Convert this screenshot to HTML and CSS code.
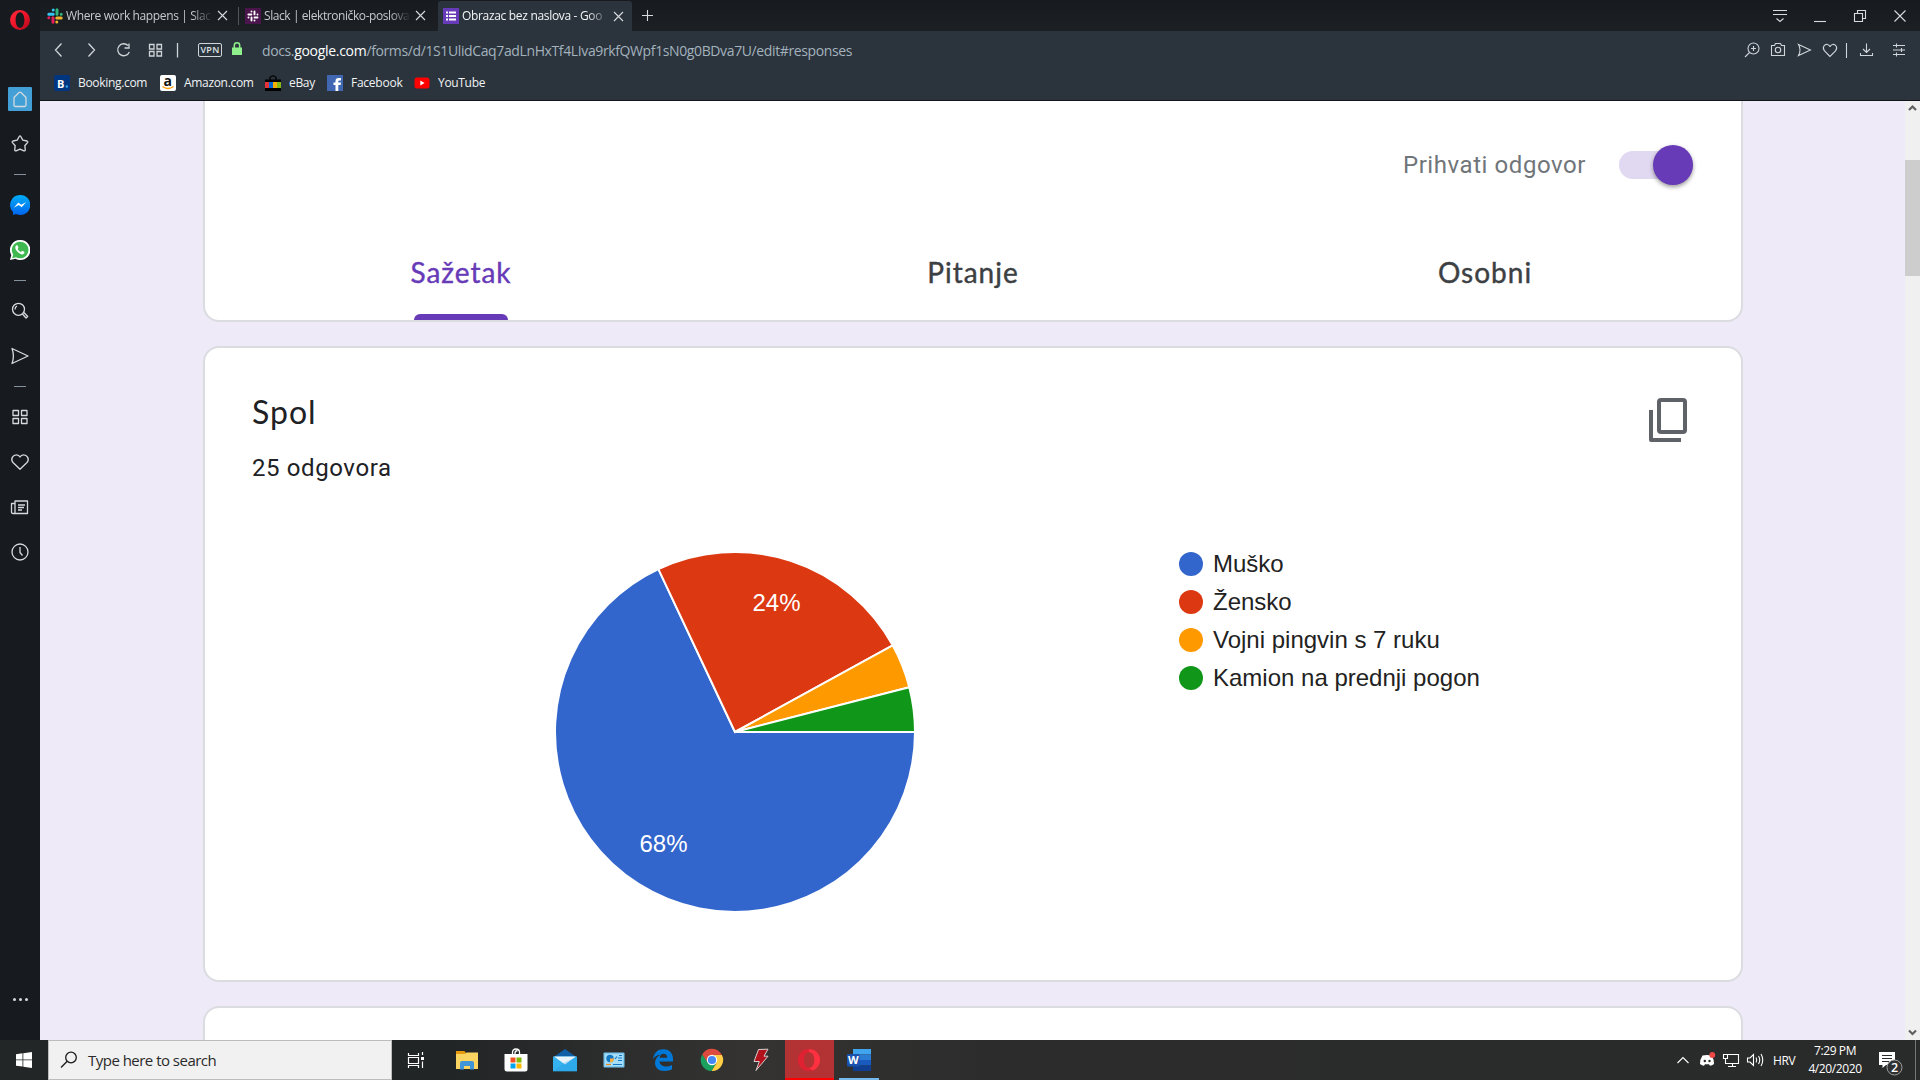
FILE: index.html
```html
<!DOCTYPE html>
<html lang="hr">
<head>
<meta charset="utf-8">
<title>Obrazac bez naslova - Google obrasci</title>
<link rel="stylesheet" href="styles.css">
</head>
<body>
<div class="screen">
  <div class="browser">
    <nav class="sidebar">
      <div class="opera-menu"><svg width="20" height="20" viewBox="0 0 20 20"><defs><linearGradient id="og" x1="0" y1="0" x2="1" y2="1"><stop offset="0" stop-color="#ff2b3c"/><stop offset=".5" stop-color="#f0142a"/><stop offset="1" stop-color="#a80a18"/></linearGradient></defs><path fill="url(#og)" fill-rule="evenodd" d="M10 0a10 10 0 1 0 0 20 10 10 0 0 0 0-20zm0 2.200c2.900 0 4.400 3.800 4.400 7.800s-1.500 7.800-4.400 7.800S5.600 14 5.600 10 7.100 2.200 10 2.200z"/></svg></div>
      <div class="slot"><span class="home"><svg class="line" width="24" height="24" viewBox="0 0 24 24"><path d="M6 18V10.500L11 5.500q1-.8 2 0L18 10.500V18q0 1.500-1.500 1.500h-9Q6 19.500 6 18z"/></svg></span></div>
      <div class="slot"><svg class="line" width="20" height="20" viewBox="0 0 20 20"><path d="M9.200 2.500q.8-1.200 1.600 0l2 3.600 4.200.9q1.300.5.500 1.600l-2.700 3.100.5 4.200q-.1 1.400-1.400.9L10 15.200l-3.900 1.600q-1.300.5-1.400-.9l.5-4.200-2.700-3.100q-.8-1.100.5-1.600l4.200-.9z"/></svg></div>
      <div class="dash"></div>
      <div class="slot"><svg width="20" height="20" viewBox="0 0 20 20"><defs><linearGradient id="mg" x2="0" y2="1"><stop stop-color="#00aef8"/><stop offset="1" stop-color="#0064ef"/></linearGradient></defs><path fill="url(#mg)" d="M10 0a10 10 0 1 1-4 19l-3 1v-3A10 10 0 0 1 10 0z"/><path fill="#fff" d="M3.800 12.800 8.300 7.500l3 2.200 4.900-2.700-4.500 5.300-3-2.200z"/></svg></div>
      <div class="slot"><svg width="20" height="20" viewBox="0 0 20 20"><path fill="#fff" d="M10 0a10 10 0 1 1-4.500 18.700L0 20l1.300-5A10 10 0 0 1 10 0z"/><path fill="#3fb94f" d="M10 1.700a8.300 8.300 0 1 1-4 15.500l-3.800 1 1-3.700A8.300 8.300 0 0 1 10 1.700z"/><path fill="#fff" d="m7 5.200-.9.400c-2 2.200.1 5.200 2.200 7 2.300 1.900 4.800 2.500 5.900.7l.3-1.300-2.300-1.300-1.300 1.300c-1.500-.5-2.600-1.600-3.200-3L8.500 7.800l-.8-2.300z"/></svg></div>
      <div class="dash"></div>
      <div class="slot"><svg class="line" width="20" height="20" viewBox="0 0 20 20"><circle cx="8.500" cy="8.300" r="6"/><path d="M5 8.500Q5 6 7 5M12.500 13l3.500 4 1.700-1.500-3.800-4"/></svg></div>
      <div class="slot"><svg class="line" width="20" height="20" viewBox="0 0 20 20"><path d="m2 2.500 16 7.500-16 7.500Q4.800 10 2 2.500z"/></svg></div>
      <div class="dash"></div>
      <div class="slot"><svg class="line" width="20" height="20" viewBox="0 0 20 20"><rect x="3" y="3.500" width="5.500" height="5"/><rect x="11.500" y="3.500" width="5.500" height="5"/><rect x="3" y="11.500" width="5.500" height="5"/><rect x="11.500" y="11.500" width="5.500" height="5"/></svg></div>
      <div class="slot"><svg class="line" width="20" height="20" viewBox="0 0 20 20"><path d="M10 17.300 3 10.500C0 7 3 2.800 6.500 2.800Q9 2.800 10 5q1-2.200 3.500-2.200C17 2.800 20 7 17 10.500z"/></svg></div>
      <div class="slot"><svg class="line" width="20" height="20" viewBox="0 0 20 20"><path d="M5 16.500V4h12.500v12.500H3q-1.500 0-1.500-1.500V6.500H5M8 8h7M8 10.500h6M8 13h4"/></svg></div>
      <div class="slot"><svg class="line" width="20" height="20" viewBox="0 0 20 20"><circle cx="10" cy="10" r="8"/><path d="M10 5v5.500l2.500 3"/></svg></div>
      <div class="more"><i></i><i></i><i></i></div>
    </nav>

    <div class="window">
      <header class="tabstrip">
        <div class="tab first">
          <svg width="16" height="16" viewBox="0 0 16 16"><g stroke-width="3" stroke-linecap="round"><path stroke="#36c5f0" d="M6.200 2v0M1.800 6.200h4.400"/><path stroke="#2eb67d" d="M10 1.800v4.400M14.200 6.200v0"/><path stroke="#ecb22e" d="M9.800 14v0M9.800 10h4.400"/><path stroke="#e01e5a" d="M6 9.800v4.400M1.800 9.800v0"/></g></svg>
          <span class="title t1">Where work happens | Slac</span>
          <svg class="x" width="11" height="11" viewBox="0 0 11 11"><path d="m1 1 9 9M10 1l-9 9"/></svg>
        </div>
        <div class="tab second">
          <svg width="16" height="16" viewBox="0 0 16 16"><path fill="#4a154b" d="M0 0h16v16H0z"/><g stroke="#fff" stroke-width="1.900" stroke-linecap="round"><path d="M6.500 3.500v0M3.400 6.500h3M9.500 3.400v3M12.500 6.500v0M9.500 12.500v0M9.500 9.500h3M6.500 9.500v3M3.500 9.500v0"/></g></svg>
          <span class="title t2">Slack | elektroničko-poslova</span>
          <svg class="x" width="11" height="11" viewBox="0 0 11 11"><path d="m1 1 9 9M10 1l-9 9"/></svg>
        </div>
        <div class="tab active">
          <svg width="16" height="16" viewBox="0 0 16 16"><path fill="#673ab7" d="M0 0h16v16H0z"/><path stroke="#fff" stroke-width="2" d="M3 4.500h2M6 4.500h7M3 8h2M6 8h7M3 11.500h2M6 11.500h7"/></svg>
          <span class="title t3">Obrazac bez naslova - Goo</span>
          <svg class="x" width="11" height="11" viewBox="0 0 11 11"><path d="m1 1 9 9M10 1l-9 9"/></svg>
        </div>
        <svg class="x plus" width="11" height="11" viewBox="0 0 11 11"><path d="M5.500 0v11M0 5.500h11"/></svg>
        <div class="controls">
          <svg class="x" width="40" height="30" viewBox="0 0 40 30"><path d="M13 9.500h14M13 13.500h14m-10.500 4 3.500 3 3.500-3"/></svg>
          <svg class="x" width="40" height="30" viewBox="0 0 40 30"><path d="M14 20.500h12"/></svg>
          <svg class="x" width="40" height="30" viewBox="0 0 40 30"><path d="M14.500 12.500h8v8h-8zM17.500 12V9.500h8v8H23"/></svg>
          <svg class="x" width="40" height="30" viewBox="0 0 40 30"><path d="m14.500 9.500 11 11m0-11-11 11"/></svg>
        </div>
      </header>

      <div class="addressbar">
        <svg class="nav" width="152" height="38" viewBox="40 31 152 38"><path d="m61.500 43.500-6 6.500 6 6.500M88.500 43.500l6 6.500-6 6.500M128 45.500a6 6 0 1 0 1.300 6.500M129 43.500v4.500h-4.500"/><path d="M149.500 44.500h4.500V49h-4.500zM157 44.500h4.500V49H157zM149.500 51.500h4.500V56h-4.500zM157 51.500h4.500V56H157zM177.500 43v14.500"/></svg>
        <span class="vpn">VPN</span>
        <svg class="lock" width="10" height="14" viewBox="0 0 10 14"><path fill="none" stroke="#8ff08c" stroke-width="1.500" d="M2.300 6V3.500a2.700 2.700 0 0 1 5.400 0V6"/><path fill="#8ff08c" d="M0 5.500h10V13H0z"/></svg>
        <span class="url">docs.<b>google.com</b>/forms/d/1S1UlidCaq7adLnHxTf4LIva9rkfQWpf1sN0g0BDva7U/edit#responses</span>
        <svg class="tools" width="180" height="38" viewBox="1740 31 180 38"><circle cx="1753.500" cy="48.500" r="5.500"/><path d="m1749.500 52.500-4.500 4.500M1751 48.500h5M1753.500 46v5"/><path d="M1771.500 45.500h3l1-2h5l1 2h3v10h-13z"/><circle cx="1778" cy="50" r="2.700"/><path d="m1798.500 44.500 12 5.500-12 5.500q3-5.500 0-11zM1830 56.500l-5.500-5.500c-3-4 .5-7 3-6.500q2 .3 2.500 2.500.5-2.200 2.500-2.500c2.500-.5 6 2.500 3 6.500z"/><path d="M1846.500 43v15M1866.500 43.500v8.500M1863 49l3.500 3.500 3.500-3.500M1860.500 53v2.500h12V53M1893 45.500h12M1893 50h12M1893 54.500h12M1896.500 43.500v4M1901.500 48v4M1896.500 52.500v4"/></svg>
      </div>

      <div class="bookmarks">
        <span class="bm b1"><svg width="16" height="16" viewBox="0 0 16 16"><rect width="16" height="16" rx="2" fill="#003580"/><circle cx="12.800" cy="11.500" r="1.200" fill="#2ba6e8"/><text x="3" y="12.500" fill="#fff" class="glyph-b">B</text></svg>Booking.com</span>
        <span class="bm b2"><svg width="16" height="16" viewBox="0 0 16 16"><rect width="16" height="16" rx="2" fill="#fff"/><text x="3.500" y="10.500" fill="#111" class="glyph-a">a</text><path fill="none" stroke="#f90" stroke-width="1.500" d="M2.500 11.500q5.500 4 11 0"/></svg>Amazon.com</span>
        <span class="bm b3"><svg width="16" height="16" viewBox="0 0 16 16"><path d="M5 5V2.500Q8-.8 11 2.500V5" fill="none" stroke="#000" stroke-width="1.300"/><path d="M0 4.500h16V7H0zM0 12.500h16V16H0z"/><path fill="#e53238" d="M0 7h4v6H0z"/><path fill="#0064d2" d="M4 7h4v6H4z"/><path fill="#f5af02" d="M8 7h4v6H8z"/><path fill="#86b817" d="M12 7h4v6h-4z"/></svg>eBay</span>
        <span class="bm b4"><svg width="16" height="16" viewBox="0 0 16 16"><path fill="#4267b2" d="M0 0h16v16H0z"/><path fill="#fff" d="M8.500 16V10H6.500V7.500h2V6q0-3 3-3H14v2.400h-1.700q-1 0-1 1v1.100H14L13.600 10h-2.300v6z"/></svg>Facebook</span>
        <span class="bm b5"><svg width="16" height="16" viewBox="0 0 16 16"><rect x=".5" y="2.500" width="15" height="11" rx="2.500" fill="#f00"/><path fill="#fff" d="M6.300 5.500v5L10.600 8z"/></svg>YouTube</span>
      </div>

      <div class="viewport">
        <main class="page">
          <section class="card head">
            <div class="accept">
              <span>Prihvati odgovor</span>
              <span class="switch"><span class="knob"></span></span>
            </div>
            <div class="views">
              <div class="view selected">Sažetak</div>
              <div class="view">Pitanje</div>
              <div class="view">Osobni</div>
            </div>
          </section>
          <section class="card question">
            <div class="qhead">
              <div>
                <h1>Spol</h1>
                <p>25 odgovora</p>
              </div>
              <svg width="40" height="46" viewBox="0 0 40 46"><rect x="11" y="3" width="26" height="32" rx="2" fill="none" stroke="#5f6368" stroke-width="4"/><path d="M3 13v30h30" fill="none" stroke="#5f6368" stroke-width="4" stroke-linejoin="round"/></svg>
            </div>
            <div class="chart">
              <svg class="pie" width="360" height="360" viewBox="-180 -180 360 360">
                <g stroke="#fff" stroke-width="2">
                  <path fill="#3366cc" d="M0 0H180A180 180 0 1 1-76.600-162.900z"/>
                  <path fill="#dc3912" d="M0 0-76.600-162.900A180 180 0 0 1 157.700-86.700z"/>
                  <path fill="#ff9900" d="M0 0 157.700-86.700A180 180 0 0 1 174.300-44.800z"/>
                  <path fill="#109618" d="M0 0 174.300-44.800A180 180 0 0 1 180 0z"/>
                </g>
                <text x="-95.500" y="120">68%</text>
                <text x="17.500" y="-121">24%</text>
              </svg>
              <ul class="legend">
                <li><i class="blue"></i>Muško</li>
                <li><i class="red"></i>Žensko</li>
                <li><i class="orange"></i>Vojni pingvin s 7 ruku</li>
                <li><i class="green"></i>Kamion na prednji pogon</li>
              </ul>
            </div>
          </section>
          <section class="card next"></section>
        </main>
        <div class="scrollbar">
          <svg width="15" height="15" viewBox="0 0 15 15"><path d="m4 9 3.500-3.500L11 9"/></svg>
          <div class="thumb"></div>
          <svg width="15" height="15" viewBox="0 0 15 15"><path d="M4 5.500 7.500 9 11 5.500"/></svg>
        </div>
      </div>
    </div>
  </div>

  <footer class="taskbar">
    <div class="start"><svg width="16" height="16" viewBox="0 0 16 16"><path fill="#fff" d="M0 2.200 6.500 1.300v6.200H0zM7.300 1.200 16 0v7.500H7.300zM0 8.300h6.500v6.300L0 13.700zM7.300 8.300H16V16l-8.700-1.200z"/></svg></div>
    <div class="search"><svg width="18" height="18" viewBox="0 0 18 18"><circle cx="11" cy="6.500" r="5.300"/><path d="M7.200 10.300 1 16.500"/></svg><span>Type here to search</span></div>
    <div class="app taskview"><svg width="18" height="18" viewBox="0 0 18 18"><path fill="none" stroke="#fff" stroke-width="1.200" d="M1.500 2v2.500h10V2M1.500 6.500h10v6h-10zM1.500 17v-2.500h10V17M15.500 1v3M15.500 10.500V17"/><path fill="#fff" d="M14 6h3v3h-3z"/></svg></div>
    <div class="app"><svg width="24" height="20" viewBox="0 0 24 20"><path fill="#e69a0c" d="M1 1h8.500l1.500 2v3H1z"/><path fill="#fcd462" d="M1 4h9l1.500-1.500H23V19H1z"/><path fill="#3f95d8" d="M5 19.500V13q0-2 2-2h10q2 0 2 2v6.500h-4V16H9v3.500z"/></svg></div>
    <div class="app"><svg width="24" height="24" viewBox="0 0 24 24"><path fill="none" stroke="#fff" stroke-width="1.300" d="M8.500 7V4.500Q8.500 1 12 1t3.500 3.500V7M11 7V5q0-2 2.500-2.500"/><path fill="#fff" d="M.5 6h23v15q0 2.500-2.500 2.500H3Q.5 23.500.5 21z"/><path fill="#f25022" d="M6.500 9.500h5v5h-5z"/><path fill="#7fba00" d="M12.500 9.500h5v5h-5z"/><path fill="#00a4ef" d="M6.500 15.500h5v5h-5z"/><path fill="#ffb900" d="M12.500 15.500h5v5h-5z"/></svg></div>
    <div class="app"><svg width="24" height="24" viewBox="0 0 24 24"><path fill="#0f5fa8" d="m12 1 12 8.500H0z"/><path fill="#35b3f1" d="M0 8.500h24v14.800H0z"/><path fill="#e9f3fa" d="M1 8.500h22l-11 8z"/><path fill="#1d8fdc" d="m0 23.300 12-9L24 8.500v14.800z" opacity=".25"/></svg></div>
    <div class="app"><svg width="22" height="18" viewBox="0 0 22 18"><rect x=".5" y="1.500" width="21" height="15" rx="1" fill="#7cc8f0"/><path fill="#a5ddf8" d="M2 3h18v12H2z"/><circle cx="7" cy="7.500" r="3.700" fill="#1477c4"/><path fill="#ffb03a" d="M7 7.500h4A4 4 0 0 1 7 11.500z"/><path fill="none" stroke="#1477c4" stroke-width="1.200" d="m12 8 2-2.500M16 4.500h3M15 7h4M15 9.500h4M10 13.500h9"/><path stroke="#e88a1a" stroke-width="1.200" d="M3 13.500h5"/></svg></div>
    <div class="app"><svg width="22" height="22" viewBox="0 0 22 22"><path fill="#0078d7" d="M1 10C2 3.500 6 .3 11.500.3 18 .3 21 5 21 10v2.500H7.500c.2 3.500 3.500 5 6.500 5q3.500 0 6-1.500v4.300c-2 1.100-4.500 1.700-7.500 1.700C6.500 22 3 18.500 3 14c0-4 2.300-6.700 5.700-8.200C5.500 6 2.700 7.300 1 10zm6.700-1.200h7.500c0-2.700-1.500-4-3.800-4-2.200 0-3.500 1.700-3.700 4z"/></svg></div>
    <div class="app"><svg width="24" height="24" viewBox="0 0 24 24"><path fill="#dd4b3e" d="M2.200 6.500A11 11 0 0 1 21.900 7H12l-5 7.500z"/><path fill="#ffce44" d="M21.900 7A11 11 0 0 1 11.500 23l5-8.200L14 7z"/><path fill="#1aa15f" d="M2.200 6.500A11 11 0 0 0 11.500 23l4.300-7.500L8 15z"/><circle cx="12" cy="12" r="5.200" fill="#fff"/><circle cx="12" cy="12" r="4.100" fill="#4587f4"/></svg></div>
    <div class="app"><svg width="20" height="24" viewBox="0 0 20 24"><path fill="#b3121d" stroke="#d8d0d0" stroke-width="1" d="m7.500 1.500 9.500-.3-4 7h4L5 22.500l3.300-9H3z"/></svg></div>
    <div class="app opera"><svg width="24" height="24" viewBox="0 0 20 20"><path fill="#ff3040" fill-rule="evenodd" d="M10 .8a9.200 9.200 0 1 0 0 18.400A9.200 9.200 0 0 0 10 .8zm0 2.700c3 0 4.500 3 4.500 6.500s-1.500 6.500-4.500 6.500S5.800 13.500 5.800 10 7 3.500 10 3.500z"/><path fill="#b00d1e" fill-rule="evenodd" d="M10 .8A9.200 9.200 0 1 0 13 18.700q-1-1-3-2.200c-3 0-4.200-3-4.200-6.500S7 3.500 10 3.500z" opacity=".4"/></svg></div>
    <div class="app word"><svg width="24" height="22" viewBox="0 0 24 22"><path fill="#41a5ee" d="M6 0h18v5.500H6z"/><path fill="#2b7cd3" d="M6 5.500h18V11H6z"/><path fill="#185abd" d="M6 11h18v5.500H6z"/><path fill="#103f91" d="M6 16.500h18V22H6z"/><rect y="5" width="12.500" height="12.500" rx="1" fill="#1b52ae"/><text x="1" y="15" fill="#fff" class="glyph-w">W</text></svg></div>
    <div class="tray">
      <svg width="98" height="40" viewBox="1670 1040 98 40"><path class="st" d="m1677.500 1063 5.500-5.500 5.500 5.500"/><path fill="#fff" d="M1702.500 1055.500q4.500-1.200 9 0 2.700 4 2.500 8.500-2 1.800-4 1.800l-1-1.500h-4l-1 1.500q-2 0-4-1.800-.2-4.500 2.500-8.500z"/><circle cx="1704.800" cy="1061" r="1.200" fill="#292a2a"/><circle cx="1709.500" cy="1061" r="1.200" fill="#292a2a"/><circle cx="1712.300" cy="1055" r="2.900" fill="#f04747"/><path class="st" d="M1728 1054.500h10.500v9H1728M1732.500 1063.500v3M1728 1066.500h8M1723.500 1054.500h4v4h-4zM1725.500 1058.500v5h3M1747.500 1058v4h2.500l3.500 3.500v-11l-3.500 3.500zM1756 1057.500q1.500 2.500 0 5M1758.500 1056q2.500 4 0 8M1761 1054q3.500 6 0 12"/></svg>
      <span class="lang">HRV</span>
      <div class="clock"><span>7:29 PM</span><span>4/20/2020</span></div>
      <svg width="48" height="40" viewBox="1872 1040 48 40"><path fill="#fff" d="M1879 1052h16v13h-9l-3.500 3v-3h-3.500z"/><path stroke="#292a2a" d="M1882 1055.500h10M1882 1058.500h10M1882 1061.500h7"/><circle cx="1894.500" cy="1067.500" r="7.500" fill="#303132" stroke="#a0a0a0"/><text x="1891" y="1072" fill="#fff" class="glyph-n">2</text><path stroke="#777" d="M1915.500 1040v40"/></svg>
    </div>
  </footer>
</div>
</body>
</html>
```
FILE: styles.css
```css
* { box-sizing: border-box; }
body { margin: 0; font-family: "Open Sans", "Noto Sans", sans-serif; }
svg { display: block; flex: none; }
.screen { width: 1920px; height: 1080px; display: flex; flex-direction: column; overflow: hidden; background: #181c20; }
.browser { flex: 1; min-height: 0; display: flex; }

/* Opera sidebar */
.sidebar { width: 40px; background: #171b20; display: flex; flex-direction: column; align-items: center; }
.opera-menu { height: 76px; padding-top: 10px; }
.slot { height: 45px; display: flex; align-items: center; justify-content: center; }
.home { background: #42a0d6; border-radius: 1px; }
.line { fill: none; stroke: #d5dade; stroke-width: 1.3; stroke-linejoin: round; }
.dash { height: 16px; width: 12px; background: linear-gradient(#84929b, #84929b) center / 12px 1px no-repeat; }
.more { margin-top: auto; margin-bottom: 39px; display: flex; gap: 3px; }
.more i { width: 3px; height: 3px; border-radius: 50%; background: #d5dade; }

.window { flex: 1; min-width: 0; display: flex; flex-direction: column; }

/* Tabs */
.tabstrip { height: 31px; display: flex; align-items: center; background: linear-gradient(#171a1e, #1c2024); color: #c6cacd; font-size: 12px; }
.tab { display: flex; align-items: center; height: 30px; }
.tab.first { width: 198px; padding-left: 7px; }
.tab.second { width: 200px; padding-left: 6px; border-left: 1px solid transparent; border-image: linear-gradient(transparent 7px, #51565a 7px 23px, transparent 23px) 1; }
.tab.active { width: 194px; padding-left: 5px; background: #2b343d; color: #f2f4f5; align-self: flex-end; border-radius: 3px 3px 0 0; }
.title { line-height: 18px; margin-left: 3px; width: 146px; white-space: nowrap; -webkit-mask-image: linear-gradient(90deg, #000 126px, transparent 147px); mask-image: linear-gradient(90deg, #000 126px, transparent 147px); }
.t1 { letter-spacing: -.38px; }
.t2 { letter-spacing: -.42px; }
.t3 { letter-spacing: -.32px; }
.x { fill: none; stroke: #d7dbde; stroke-width: 1.1; }
.tab .x { margin-left: 5px; }
.plus { margin-left: 10px; }
.controls { margin-left: auto; display: flex; }
.controls svg:nth-child(2) { margin-right: 0; }

/* Address bar */
.addressbar { height: 38px; background: #2b343d; display: flex; align-items: center; }
.nav, .tools { fill: none; stroke: #cfd5d9; stroke-width: 1.1; }
.nav { stroke-width: 1.3; }
.vpn { width: 24px; height: 14px; margin-left: 6px; border: 1px solid #cfd5d9; border-radius: 2px; color: #dfe3e6; font: 600 9px/12px "Open Sans", sans-serif; text-align: center; letter-spacing: .3px; }
.lock { margin-left: 10px; margin-top: -2px; }
.url { margin-left: 20px; font-size: 14px; color: #a3b2bc; white-space: nowrap; letter-spacing: -.38px; }
.url b { font-weight: 400; color: #fff; letter-spacing: -.3px; }
.tools { margin-left: auto; }

/* Bookmarks */
.bookmarks { height: 32px; background: #2b343d; border-bottom: 1px solid #12161a; padding: 0 0 4px 14px; display: flex; align-items: center; font-size: 12px; color: #f0f2f3; }
.bm { display: flex; align-items: center; gap: 8px; white-space: nowrap; letter-spacing: -.32px; }
.b1 { width: 106px; } .b2 { width: 105px; } .b3 { width: 62px; } .b4 { width: 87px; }
.b4 { letter-spacing: -.25px; }
.glyph-b { font: 700 11px "Open Sans", sans-serif; letter-spacing: 0; }
.glyph-a { font: 700 14px "Open Sans", sans-serif; letter-spacing: 0; }
.glyph-w { font: 700 11px "Open Sans", sans-serif; }
.glyph-n { font: 600 12.500px "Open Sans", sans-serif; }

/* Form responses */
.viewport { flex: 1; min-height: 0; display: flex; background: #eeeaf8; }
.page { flex: 1; padding-left: 163px; display: flex; flex-direction: column; gap: 24px; overflow: hidden; }
.card { width: 1540px; flex: none; background: #fff; border: 2px solid #dadce0; border-radius: 16px; }
.head { height: 221px; border-top: 0; border-radius: 0 0 16px 16px; display: flex; flex-direction: column; }
.accept { display: flex; align-items: center; justify-content: flex-end; height: 128px; padding-right: 48px; font: 24px "Roboto", sans-serif; letter-spacing: .57px; color: #70757a; }
.switch { width: 74px; height: 28px; margin-left: 33px; display: flex; align-items: center; justify-content: flex-end; background: #e1d8f1; border-radius: 20px; }
.knob { width: 40px; height: 40px; flex: none; border-radius: 50%; background: #673ab7; box-shadow: 0 2px 4px rgba(0, 0, 0, .4); }
.views { flex: 1; display: grid; grid-template-columns: repeat(3, 1fr); font-family: "Lato", sans-serif; font-size: 28px; letter-spacing: 1px; color: #3c4043; -webkit-text-stroke: .4px currentColor; }
.view { display: flex; flex-direction: column; align-items: center; justify-content: flex-end; line-height: 34px; padding-bottom: 31px; }
.view.selected { color: #673ab7; padding-bottom: 0; }
.view.selected::after { content: ""; width: 94px; height: 6px; margin-top: 25px; border-radius: 6px 6px 0 0; background: #673ab7; }
.question { height: 636px; padding: 40px 48px 0 47px; }
.qhead { display: flex; justify-content: space-between; color: #202124; }
.qhead svg { margin: 9px 5px 0 0; }
h1 { margin: 3px 0 0; font: 400 32px/42px "Lato", sans-serif; letter-spacing: 1px; }
p { margin: 19px 0 0; font: 24px/32px "Roboto", sans-serif; letter-spacing: .6px; }
.chart { display: flex; margin-top: 68px; padding-left: 303px; }
.pie text { font: 24px "Liberation Sans", Arial, sans-serif; fill: #fff; }
.legend { list-style: none; margin: -7px 0 0 264px; padding: 0; font: 24px/38px "Liberation Sans", Arial, sans-serif; color: #222; }
.legend li { display: flex; align-items: center; gap: 10px; white-space: nowrap; }
.legend i { width: 24px; height: 24px; border-radius: 50%; }
.blue { background: #3366cc; } .red { background: #dc3912; } .orange { background: #ff9900; } .green { background: #109618; }
.next { height: 200px; }
.scrollbar { width: 15px; background: #f0f0f0; display: flex; flex-direction: column; }
.scrollbar svg { fill: none; stroke: #606060; stroke-width: 2.2; }
.scrollbar svg:last-child { margin-top: auto; }
.thumb { height: 116px; margin-top: 44px; background: #cdcdcd; }

/* Windows taskbar */
.taskbar { height: 40px; display: flex; color: #fff; background: linear-gradient(90deg, #232627, #222526 450px, #343332 750px, #2c2c2c 1000px, #292a2a); }
.start { width: 48px; display: flex; align-items: center; justify-content: center; }
.search { width: 344px; background: #f1f1f1; border: 1px solid #bcbcbc; display: flex; align-items: center; color: #2a2a2a; font-size: 15px; padding-left: 11px; white-space: nowrap; }
.search svg { fill: none; stroke: #1b1b1b; stroke-width: 1.3; }
.search span { margin-left: 10px; letter-spacing: -.52px; }
.app { width: 49px; display: flex; align-items: center; justify-content: center; }
.taskview { width: 50px; padding-right: 2px; }
.opera { background: #b33335; border-bottom: 2px solid #f00; }
.opera svg { margin: 2px 2px 0 0; }
.word { background: linear-gradient(#76b9ed, #76b9ed) center bottom / 40px 2px no-repeat; }
.tray { margin-left: auto; display: flex; align-items: center; font-size: 12px; }
.st { fill: none; stroke: #fff; stroke-width: 1.1; }
.lang { width: 31px; padding-left: 5px; letter-spacing: -.4px; }
.clock { width: 73px; padding-right: 1px; display: flex; flex-direction: column; align-items: center; line-height: 18px; letter-spacing: -.4px; }
```
